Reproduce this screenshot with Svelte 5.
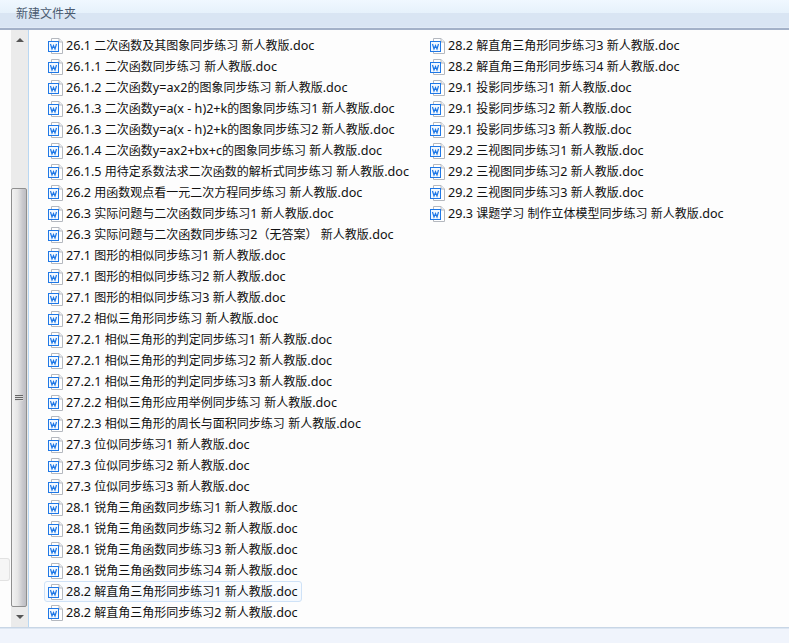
<script lang="ts">
	const files: string[] = [
		'26.1 二次函数及其图象同步练习 新人教版.doc',
		'26.1.1 二次函数同步练习 新人教版.doc',
		'26.1.2 二次函数y=ax2的图象同步练习 新人教版.doc',
		'26.1.3 二次函数y=a(x - h)2+k的图象同步练习1 新人教版.doc',
		'26.1.3 二次函数y=a(x - h)2+k的图象同步练习2 新人教版.doc',
		'26.1.4 二次函数y=ax2+bx+c的图象同步练习 新人教版.doc',
		'26.1.5 用待定系数法求二次函数的解析式同步练习 新人教版.doc',
		'26.2 用函数观点看一元二次方程同步练习 新人教版.doc',
		'26.3 实际问题与二次函数同步练习1 新人教版.doc',
		'26.3 实际问题与二次函数同步练习2（无答案） 新人教版.doc',
		'27.1 图形的相似同步练习1 新人教版.doc',
		'27.1 图形的相似同步练习2 新人教版.doc',
		'27.1 图形的相似同步练习3 新人教版.doc',
		'27.2 相似三角形同步练习 新人教版.doc',
		'27.2.1 相似三角形的判定同步练习1 新人教版.doc',
		'27.2.1 相似三角形的判定同步练习2 新人教版.doc',
		'27.2.1 相似三角形的判定同步练习3 新人教版.doc',
		'27.2.2 相似三角形应用举例同步练习 新人教版.doc',
		'27.2.3 相似三角形的周长与面积同步练习 新人教版.doc',
		'27.3 位似同步练习1 新人教版.doc',
		'27.3 位似同步练习2 新人教版.doc',
		'27.3 位似同步练习3 新人教版.doc',
		'28.1 锐角三角函数同步练习1 新人教版.doc',
		'28.1 锐角三角函数同步练习2 新人教版.doc',
		'28.1 锐角三角函数同步练习3 新人教版.doc',
		'28.1 锐角三角函数同步练习4 新人教版.doc',
		'28.2 解直角三角形同步练习1 新人教版.doc',
		'28.2 解直角三角形同步练习2 新人教版.doc',
		'28.2 解直角三角形同步练习3 新人教版.doc',
		'28.2 解直角三角形同步练习4 新人教版.doc',
		'29.1 投影同步练习1 新人教版.doc',
		'29.1 投影同步练习2 新人教版.doc',
		'29.1 投影同步练习3 新人教版.doc',
		'29.2 三视图同步练习1 新人教版.doc',
		'29.2 三视图同步练习2 新人教版.doc',
		'29.2 三视图同步练习3 新人教版.doc',
		'29.3 课题学习 制作立体模型同步练习 新人教版.doc'
	];
	const selected = 26;

	// Chinese runs sit at 12px, the latin runs are a touch larger
	const runs = (name: string) => name.match(/[\u3000-\u9fff\uff00-\uffef]+|[^\u3000-\u9fff\uff00-\uffef]+/g) ?? [];
	const isCjk = (run: string) => /[\u3000-\u9fff\uff00-\uffef]/.test(run);
</script>

<div class="window">
	<header class="titlebar"><span>新建文件夹</span></header>

	<div class="body">
		<aside class="nav">
			<div class="nav-item"></div>
		</aside>

		<div class="scrollbar">
			<div class="arrow arrow-up"></div>
			<div class="thumb">
				<div class="grip"><i></i><i></i><i></i></div>
			</div>
			<div class="arrow arrow-down"></div>
		</div>

		<main class="files">
			{#each files as name, i}
				<div class="file" class:selected={i === selected}>
					<svg class="doc" viewBox="0 0 16 16" width="16" height="16" aria-hidden="true">
						<path d="M3.5 0.5 H11 L14.5 4 V15.5 H3.5 Z" fill="#fff" stroke="#b4b8bf" />
						<path d="M11 0.5 V4 H14.5" fill="#eef0f3" stroke="#b4b8bf" />
						<rect x="0.5" y="3.5" width="10" height="10" fill="#f3f9ff" stroke="#1f78e6" />
						<path d="M2.5 6 L4 11 L5.5 7.5 L7 11 L8.5 6" fill="none" stroke="#1f78e6" stroke-width="1.2" />
					</svg>
					<span class="name">{#each runs(name) as run}<span class:latin={!isCjk(run)}>{run}</span>{/each}</span>
				</div>
			{/each}
		</main>
	</div>

	<footer class="statusbar"></footer>
</div>

<style>
	:global(body) {
		margin: 0;
		background: #fff;
	}

	.window {
		display: flex;
		flex-direction: column;
		width: 789px;
		height: 643px;
		overflow: hidden;
		font-family: 'Noto Sans', 'Noto Sans CJK SC', sans-serif;
	}

	.titlebar {
		box-sizing: border-box;
		height: 30px;
		padding: 5px 0 0 16px;
		flex-shrink: 0;
		font-size: 12px;
		line-height: 18px;
		color: #4a5a70;
		background: linear-gradient(to bottom, #f0f8ff 0, #e6f1fb 13px, #d9e5f3 13px, #d9e5f3 27px, #e6eef8 28px);
		border-bottom: 2px solid #a3b1c8;
	}

	.body {
		display: flex;
		flex: 1;
		min-height: 0;
		background: #fdfdfd;
	}

	.nav {
		width: 11px;
		flex-shrink: 0;
		padding-top: 528px;
		box-sizing: border-box;
	}

	.nav-item {
		box-sizing: border-box;
		width: 10px;
		height: 23px;
		background: #f6f6f6;
		border: 1px solid #e2e2e2;
		border-left: 0;
		border-radius: 0 3px 3px 0;
	}

	.scrollbar {
		display: flex;
		flex-direction: column;
		width: 17px;
		flex-shrink: 0;
		background: #ebebeb;
		border-right: 1px solid #b9d7f2;
		box-sizing: content-box;
	}

	.arrow {
		display: flex;
		align-items: center;
		justify-content: center;
		height: 20px;
		flex-shrink: 0;
	}

	.arrow::before {
		content: '';
		border-left: 4px solid transparent;
		border-right: 4px solid transparent;
	}

	.arrow-up::before {
		border-bottom: 4px solid #555;
	}

	.arrow-down::before {
		border-top: 4px solid #555;
	}

	.thumb {
		display: flex;
		align-items: center;
		justify-content: center;
		box-sizing: border-box;
		height: 419px;
		margin-top: 138px;
		width: 16px;
		border: 1px solid #8f8f8f;
		border-radius: 2px;
		background: linear-gradient(to right, #f2f2f2 0, #e6e6e6 40%, #c9c9ce 75%, #bdbdc2 100%);
	}

	.grip {
		display: flex;
		flex-direction: column;
		gap: 1px;
	}

	.grip i {
		display: block;
		width: 8px;
		height: 1px;
		background: #666;
		box-shadow: 0 1px 0 #ddd;
	}

	.arrow-down {
		height: 19px;
	}

	.files {
		display: grid;
		grid-auto-flow: column;
		grid-template-rows: repeat(28, 21px);
		grid-template-columns: 382px 1fr;
		padding: 5px 0 0 15px;
		min-width: 0;
		flex: 1;
		font-size: 12px;
		color: #111;
	}

	.file {
		display: flex;
		align-items: center;
		justify-self: start;
		box-sizing: border-box;
		height: 21px;
		padding: 0 3px;
		gap: 2px;
		border: 1px solid transparent;
		white-space: nowrap;
		line-height: 19px;
	}

	.latin {
		font-size: 12.6px;
	}

	.file.selected {
		border-color: #cfe2f7;
		border-radius: 3px;
		background: linear-gradient(to bottom, #fbfdff, #f3f8fe);
	}

	.doc {
		flex-shrink: 0;
	}

	.statusbar {
		height: 15px;
		flex-shrink: 0;
		background: #f0f4fc;
		border-top: 1px solid #c8d6e6;
		box-shadow: inset 0 1px 0 #dce6f2;
	}
</style>
